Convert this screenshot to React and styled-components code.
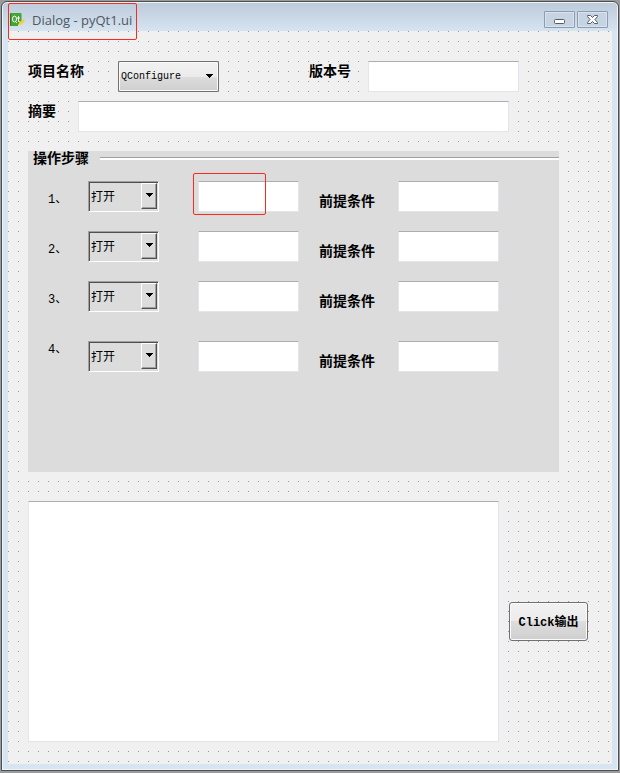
import React from 'react';
import styled, { createGlobalStyle } from 'styled-components';

const GlobalStyle = createGlobalStyle`
  * {
    box-sizing: border-box;
  }

  body {
    margin: 0;
    background-color: #9b9b9b;
    font-family: 'Liberation Mono', 'Noto Sans CJK SC', monospace;
    font-size: 12px;
    color: #000;
  }
`;

const Window = styled.main`
  position: relative;
  margin: 1px 1px 2px;
  padding: 1px 6px 6px;
  border: 1px solid #4d4e50;
  border-radius: 6px 6px 0 0;
  background: linear-gradient(#bccad9, #d7e4f2 30px);
  box-shadow: inset 0 0 0 1px #eef4fa;
`;

const TitleBar = styled.header`
  height: 28px;
  display: flex;
  align-items: center;
  gap: 2px;
  padding: 0 4px 0 1px;
`;

const Title = styled.h1`
  flex: 1;
  margin: 0;
  padding: 6px 0 0 5px;
  font-family: 'Open Sans', sans-serif;
  font-size: 13px;
  font-weight: 400;
  line-height: 20px;
  color: #50565e;
`;

const TitleLogo = styled.svg`
  margin-top: 6px;
`;

const WindowButton = styled.button`
  width: 31px;
  height: 17px;
  margin-top: 5px;
  padding: 0;
  display: flex;
  justify-content: center;
  align-items: center;
  border: 1px solid #8c9bb2;
  border-radius: 1px;
  background-color: #c6d3e1;
  box-shadow: inset 0 0 0 1px #d8e3ee;
`;

const Marker = styled.span`
  position: absolute;
  top: ${props => props.$top};
  left: ${props => props.$left};
  width: ${props => props.$width};
  height: ${props => props.$height};
  border: 1px solid #fb2a1e;
  border-radius: 2px;
  pointer-events: none;
`;

const Form = styled.form`
  padding: 30px 24px 22px 20px;
  background: linear-gradient(90deg, transparent 1px, #f0f0f0 1px),
    linear-gradient(#999 1px, #f0f0f0 1px);
  background-size: 10px 10px;
`;

const FieldRow = styled.div`
  display: flex;
  margin: 0 ${props => props.$right} 9px 0;
`;

const Label = styled.label`
  flex: none;
  width: ${props => props.$width};
  padding-bottom: 2px;
  font-family: 'Noto Sans CJK SC', sans-serif;
  font-size: 14px;
  font-weight: 700;
  line-height: 19px;
`;

const TextInput = styled.input`
  flex: 1;
  width: 100%;
  min-width: 0;
  height: 31px;
  padding: 0 4px;
  border: 1px solid #e2e5ee;
  border-top-color: #abadb3;
  border-radius: 1px;
  outline: none;
  background-color: #fff;
  font: inherit;
`;

const ConfigBox = styled.div`
  flex: none;
  display: grid;
  grid-template-columns: 1fr 13px;
  align-items: center;
  width: 101px;
  height: 31px;
  margin-right: 90px;
`;

const ConfigSelect = styled.select`
  grid-area: 1 / 1 / 2 / 3;
  height: 31px;
  padding: 0 0 0 2px;
  appearance: none;
  border: 1px solid #707070;
  border-radius: 2px;
  background: linear-gradient(#f2f2f2, #ebebeb 50%, #dddddd 50%, #cfcfcf);
  box-shadow: inset 0 0 0 1px #fafafa;
  font: inherit;
  font-size: 10px;
  color: #000;
`;

const Arrow = styled.svg`
  grid-area: 1 / 2;
  z-index: 1;
  pointer-events: none;
`;

const Steps = styled.section`
  margin: 19px 29px 29px 0;
  padding-bottom: 100px;
  background-color: #dcdcdc;
`;

const StepsTitle = styled.h2`
  display: flex;
  align-items: center;
  gap: 11px;
  height: 14px;
  margin: 0 0 16px;
  padding-left: 5px;
  font-family: 'Noto Sans CJK SC', sans-serif;
  font-size: 14px;

  &::after {
    content: '';
    flex: 1;
    height: 2px;
    border-top: 1px solid #a0a0a0;
    background-color: #fff;
  }
`;

const StepsTitleText = styled.span`
  padding-bottom: 2px;
  line-height: 12px;
`;

const StepList = styled.div`
  display: flex;
  flex-direction: column;
  gap: 19px;
  padding: 0 60px 0 20px;
`;

const StepRow = styled.div`
  display: grid;
  grid-template-columns: 20px 90px 1fr 59px 1fr;
  column-gap: 20px;
  align-items: end;
  height: ${props => (props.$tall ? '41px' : '31px')};
`;

const StepNumber = styled.label`
  align-self: start;
  margin-top: 12px;
  line-height: 14px;
  white-space: nowrap;
`;

const StepBox = styled.div`
  display: grid;
  grid-template-columns: 1fr 16px;
  width: 71px;
  height: 31px;
  padding: 0 1px 1px 0;
  border: 1px solid #a0a0a0;
  border-right-color: #fff;
  border-bottom-color: #fff;
  box-shadow: inset 1px 1px 0 #505050;
`;

const StepSelect = styled.select`
  grid-area: 1 / 1 / 2 / 3;
  width: 100%;
  height: 28px;
  padding: 3px 0 0 2px;
  appearance: none;
  border: 0;
  background: none;
  font: inherit;
  color: #000;
`;

const StepButton = styled.span`
  grid-area: 1 / 2;
  display: flex;
  justify-content: center;
  align-items: center;
  margin: 1px 0;
  border: 1px solid #fff;
  border-right-color: #505050;
  border-bottom-color: #505050;
  box-shadow: inset -1px -1px 0 #a0a0a0;
  pointer-events: none;
`;

const InputCell = styled.div`
  position: relative;
  display: flex;
`;

const OutputRow = styled.div`
  display: flex;
  align-items: center;
  gap: 10px;
`;

const Output = styled.textarea`
  flex: 1;
  min-width: 0;
  height: 241px;
  border: 1px solid #e2e5ee;
  border-top-color: #abadb3;
  outline: none;
  resize: none;
  background-color: #fff;
  font: inherit;
`;

const SubmitButton = styled.button`
  width: 79px;
  height: 39px;
  padding: 0 0 2px;
  border: 1px solid #707070;
  border-radius: 3px;
  background: linear-gradient(#f2f2f2, #ebebeb 50%, #dddddd 50%, #cfcfcf);
  box-shadow: inset 0 0 0 1px #fafafa;
  font: inherit;
  font-weight: 700;
  color: #000;
`;

const steps = [
  { id: 1, marked: true },
  { id: 2 },
  { id: 3 },
  { id: 4, tall: true },
];

function DownArrow() {
  return (
    <Arrow
      width="7"
      height="6"
      viewBox="0 0 7 6"
      shapeRendering="crispEdges"
      aria-hidden="true"
    >
      <path d="M0 0h7v1H6v1H5v1H4v1H3V3H2V2H1V1H0z" />
    </Arrow>
  );
}

function QtLogo() {
  return (
    <TitleLogo width="16" height="16" viewBox="0 0 16 16" aria-hidden="true">
      <path d="M2 1h10v10l-3 3H1V2z" fill="#43a536" />
      <path d="M1 2l1-1v12l-1 1z" fill="#2b7c25" />
      <path d="M12 1l1 1v8l-1 1z" fill="#7cc46d" />
      <ellipse cx="5.5" cy="7" rx="2" ry="3" fill="none" stroke="#fff" />
      <path d="M6 9l2 2M9.500 4v5q0 1 1.500 1M8 6h3" fill="none" stroke="#fff" />
      <path d="M9 14l1-3 4-4 2 2-4 4z" fill="#f4cf3a" />
      <path d="M9 14l1-2 1 1z" fill="#fff6c8" />
    </TitleLogo>
  );
}

function Step({ id, marked, tall }) {
  return (
    <StepRow $tall={tall}>
      <StepNumber htmlFor={`action-${id}`}>{id}、</StepNumber>
      <StepBox>
        <StepSelect id={`action-${id}`}>
          <option>打开</option>
        </StepSelect>
        <StepButton>
          <DownArrow />
        </StepButton>
      </StepBox>
      <InputCell>
        <TextInput type="text" aria-labelledby="steps-title" />
        {marked && (
          <Marker $top="-8px" $left="-5px" $width="73px" $height="42px" />
        )}
      </InputCell>
      <Label htmlFor={`condition-${id}`}>前提条件</Label>
      <TextInput type="text" id={`condition-${id}`} />
    </StepRow>
  );
}

export default function App() {
  return (
    <>
      <GlobalStyle />
      <Window>
        <TitleBar>
          <QtLogo />
          <Title>Dialog - pyQt1.ui</Title>
          <WindowButton type="button" aria-label="Minimize">
            <svg width="11" height="15" viewBox="0 0 11 15">
              <rect x="0.5" y="7.500" width="10" height="4" rx="1" fill="#fff" stroke="#545a6b" />
            </svg>
          </WindowButton>
          <WindowButton type="button" aria-label="Close">
            <svg width="13" height="11" viewBox="0 0 13 11">
              <path
                d="M1.500 1.500h3l2 2 2-2h3v1l-2.500 3 2.500 3v1h-3l-2-2-2 2h-3v-1l2.500-3-2.500-3z"
                fill="#fff"
                stroke="#545a6b"
              />
            </svg>
          </WindowButton>
        </TitleBar>

        <Form onSubmit={e => e.preventDefault()}>
          <FieldRow $right="69px">
            <Label htmlFor="project" $width="90px">项目名称</Label>
            <ConfigBox>
              <ConfigSelect id="project">
                <option>QConfigure</option>
              </ConfigSelect>
              <DownArrow />
            </ConfigBox>
            <Label htmlFor="version" $width="59px">版本号</Label>
            <TextInput type="text" id="version" />
          </FieldRow>
          <FieldRow $right="79px">
            <Label htmlFor="summary" $width="50px">摘要</Label>
            <TextInput type="text" id="summary" />
          </FieldRow>

          <Steps aria-labelledby="steps-title">
            <StepsTitle id="steps-title">
              <StepsTitleText>操作步骤</StepsTitleText>
            </StepsTitle>
            <StepList>
              {steps.map(step => (
                <Step key={step.id} {...step} />
              ))}
            </StepList>
          </Steps>

          <OutputRow>
            <Output aria-label="输出" />
            <SubmitButton type="submit">Click输出</SubmitButton>
          </OutputRow>
        </Form>
        <Marker $top="1px" $left="6px" $width="129px" $height="37px" />
      </Window>
    </>
  );
}
